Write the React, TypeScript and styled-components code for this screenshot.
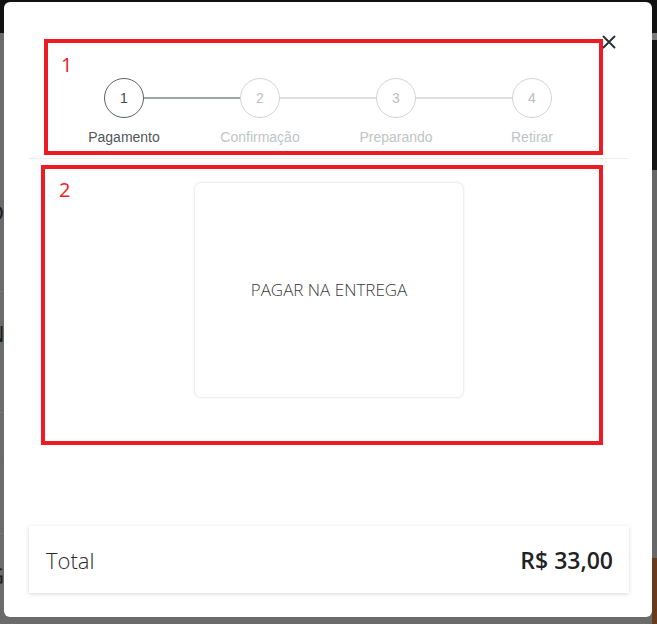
import React from 'react';
import styled, { createGlobalStyle } from 'styled-components';

const Global = createGlobalStyle`
  html, body { margin: 0; padding: 0; }
  body {
    width: 657px;
    height: 624px;
    overflow: hidden;
    font-family: "Open Sans", "Liberation Sans", sans-serif;
  }
`;

const Backdrop = styled.div`
  position: relative;
  width: 657px;
  height: 624px;
  background: #6b6b6b;
  overflow: hidden;
  display: flex;
  flex-direction: column;
`;

const TopBar = styled.div`
  flex: none;
  height: 33px;
  background: #121212;
`;

const BgBody = styled.div`
  flex: 1;
  display: flex;
`;

const BgList = styled.div`
  flex: 1;
  display: flex;
  flex-direction: column;
  padding-top: 138px;
`;

const BgRow = styled.div`
  flex: none;
  height: 121px;
  border-bottom: 1px solid #767676;
  display: flex;
  align-items: flex-start;
  padding-top: 28px;
  box-sizing: border-box;
  font: 400 22px/26px "Open Sans", sans-serif;
  color: #1c1c1c;
  & > span { margin-left: -12px; }
`;

const BgSide = styled.div`
  flex: none;
  width: 5px;
  display: flex;
  flex-direction: column;
`;

const SideBlock = styled.div<{ $h: number; $c: string }>`
  flex: none;
  height: ${p => p.$h}px;
  background: ${p => p.$c};
`;

const Modal = styled.div`
  position: absolute;
  left: 4px;
  top: 2px;
  width: 648px;
  height: 615px;
  box-sizing: border-box;
  background: #fff;
  border-radius: 6px;
  display: flex;
  flex-direction: column;
  padding: 37px 23px 24px 25px;
`;

const CloseButton = styled.button`
  position: absolute;
  top: 33px;
  right: 36px;
  width: 14px;
  height: 14px;
  padding: 0;
  border: none;
  background: none;
  display: flex;
  cursor: pointer;
`;

const Annotation = styled.div<{ $ml: number }>`
  position: relative;
  border: 4px solid #ed1c24;
  margin: 0 26px 0 ${p => p.$ml}px;
  box-sizing: border-box;
`;

const AnnoLabel = styled.span<{ $l: number; $t: number }>`
  position: absolute;
  left: ${p => p.$l}px;
  top: ${p => p.$t}px;
  font: 400 20px/20px "Open Sans", sans-serif;
  color: #ed1c24;
`;

const StepBox = styled(Annotation)`
  height: 116px;
  padding: 35px 0 0 8px;
`;

const Stepper = styled.div`
  display: grid;
  grid-template-columns: repeat(4, 136px);
`;

const Step = styled.div<{ $line?: 'done' | 'todo' }>`
  position: relative;
  display: flex;
  flex-direction: column;
  align-items: center;
  gap: 11px;
  &::after {
    content: '';
    display: ${p => (p.$line ? 'block' : 'none')};
    position: absolute;
    left: calc(50% + 20px);
    top: 19px;
    width: 96px;
    height: 2px;
    background: ${p => (p.$line === 'done' ? '#9ea3a5' : '#dedede')};
  }
`;

const Circle = styled.div<{ $active?: boolean }>`
  width: 40px;
  height: 40px;
  box-sizing: border-box;
  border-radius: 50%;
  border: 1px solid ${p => (p.$active ? '#596063' : '#d2d4d5')};
  display: flex;
  align-items: center;
  justify-content: center;
  font: 400 14px/1 "Liberation Sans", Arial, sans-serif;
  color: ${p => (p.$active ? '#454b4e' : '#bcc0c2')};
`;

const StepLabel = styled.span<{ $active?: boolean }>`
  font: 400 14px/16px "Liberation Sans", Arial, sans-serif;
  color: ${p => (p.$active ? '#50575a' : '#c0c4c6')};
  white-space: nowrap;
`;

const Divider = styled.div`
  height: 1px;
  background: #ededed;
  margin: 3px 1px 6px 0;
`;

const OptionsBox = styled(Annotation)`
  height: 280px;
  padding: 14px 0 0 150px;
  display: flex;
  align-items: flex-start;
`;

const OptionCard = styled.div`
  width: 268px;
  height: 214px;
  border-radius: 6px;
  background: #fff;
  box-shadow: 0 0 3px rgba(0, 0, 0, 0.18);
  display: flex;
  align-items: center;
  justify-content: center;
  font: 300 17px/20px "Open Sans", sans-serif;
  color: #3a3a3a;
`;

const TotalCard = styled.div`
  margin-top: auto;
  height: 67px;
  box-sizing: border-box;
  padding: 0 16px 0 17px;
  background: #fff;
  box-shadow: 0 1px 4px rgba(0, 0, 0, 0.16);
  display: flex;
  align-items: center;
  justify-content: space-between;
`;

const TotalLabel = styled.span`
  font: 300 22px/28px "Open Sans", sans-serif;
  color: #2b2b2b;
  padding-top: 1px;
`;

const TotalValue = styled.span`
  font: 600 23px/28px "Open Sans", sans-serif;
  color: #1f2326;
`;

const steps = [
  { n: 1, label: 'Pagamento' },
  { n: 2, label: 'Confirmação' },
  { n: 3, label: 'Preparando' },
  { n: 4, label: 'Retirar' },
];

export default function App() {
  return (
    <>
      <Global />
      <Backdrop>
        <TopBar />
        <BgBody>
          <BgList>
            <BgRow><span>D</span></BgRow>
            <BgRow><span>N</span></BgRow>
            <BgRow><span>Z</span></BgRow>
            <BgRow><span>G</span></BgRow>
          </BgList>
          <BgSide>
            <SideBlock $h={7} $c="#7a7a7a" />
            <SideBlock $h={130} $c="#151515" />
            <SideBlock $h={388} $c="#676767" />
            <SideBlock $h={66} $c="#6a3a1c" />
          </BgSide>
        </BgBody>
        <Modal>
          <CloseButton aria-label="Fechar">
            <svg width="14" height="14" viewBox="0 0 14 14">
              <path d="M1.5 1.5 L12.5 12.5 M12.5 1.5 L1.5 12.5" stroke="#2a2f33" strokeWidth="1.9" strokeLinecap="round" />
            </svg>
          </CloseButton>
          <StepBox $ml={15}>
            <AnnoLabel $l={13} $t={12}>1</AnnoLabel>
            <Stepper>
              {steps.map((s, i) => (
                <Step key={s.n} $line={i === 3 ? undefined : i === 0 ? 'done' : 'todo'}>
                  <Circle $active={i === 0}>{s.n}</Circle>
                  <StepLabel $active={i === 0}>{s.label}</StepLabel>
                </Step>
              ))}
            </Stepper>
          </StepBox>
          <Divider />
          <OptionsBox $ml={12}>
            <AnnoLabel $l={14} $t={11}>2</AnnoLabel>
            <OptionCard>PAGAR NA ENTREGA</OptionCard>
          </OptionsBox>
          <TotalCard>
            <TotalLabel>Total</TotalLabel>
            <TotalValue>R$ 33,00</TotalValue>
          </TotalCard>
        </Modal>
      </Backdrop>
    </>
  );
}
